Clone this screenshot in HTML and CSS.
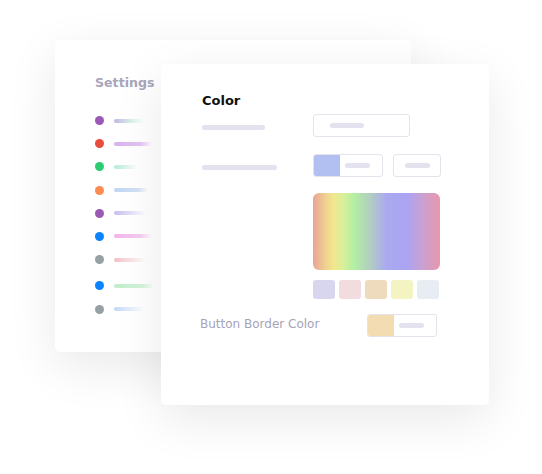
FILE: index.html
```html
<!DOCTYPE html>
<html>
<head>
<meta charset="utf-8">
<link rel="stylesheet" href="styles.css">
</head>
<body>
<div class="desk">
  <div class="card back">
    <div class="title">Settings</div>
    <ul class="menu">
      <li><span class="dot c-purple"></span><span class="bar b1"></span></li>
      <li><span class="dot c-red"></span><span class="bar b2"></span></li>
      <li><span class="dot c-green"></span><span class="bar b3"></span></li>
      <li><span class="dot c-orange"></span><span class="bar b4"></span></li>
      <li><span class="dot c-purple"></span><span class="bar b5"></span></li>
      <li><span class="dot c-blue"></span><span class="bar b6"></span></li>
      <li><span class="dot c-gray"></span><span class="bar b7"></span></li>
      <li class="gap"><span class="dot c-blue"></span><span class="bar b8"></span></li>
      <li><span class="dot c-gray"></span><span class="bar b9"></span></li>
    </ul>
  </div>
  <div class="card front">
    <div class="heading">Color</div>
    <div class="row r1">
      <span class="ph ph-a"></span>
      <div class="box wide"><span class="ph ph-in"></span></div>
    </div>
    <div class="row r2">
      <span class="ph ph-b"></span>
      <div class="controls">
        <div class="box split"><span class="sw sw-blue"></span><span class="ph ph-in2"></span></div>
        <div class="box small"><span class="ph ph-in2"></span></div>
      </div>
    </div>
    <div class="picker">
      <div class="spectrum"></div>
      <div class="swatches">
        <span class="swatch s1"></span>
        <span class="swatch s2"></span>
        <span class="swatch s3"></span>
        <span class="swatch s4"></span>
        <span class="swatch s5"></span>
      </div>
    </div>
    <div class="row r3">
      <span class="label">Button Border Color</span>
      <div class="box split"><span class="sw sw-sand"></span><span class="ph ph-in2"></span></div>
    </div>
  </div>
</div>
</body>
</html>
```
FILE: styles.css
```css
* { box-sizing: border-box; }
html, body { margin: 0; padding: 0; background: #fff; }
body { font-family: "DejaVu Sans", sans-serif; width: 542px; height: 474px; overflow: hidden; }
.desk { position: relative; width: 542px; height: 474px; }
.card {
  position: absolute;
  background: #fff;
  border-radius: 5px;
  box-shadow: 0 14px 50px rgba(0,0,0,0.09);
}
.back { left: 55px; top: 40px; width: 356px; height: 312px; padding: 35px 0 0 40px; }
.front { left: 161px; top: 64px; width: 328px; height: 341px; padding: 29px 0 0 41px; }

.title { font-size: 12.6px; font-weight: bold; color: #a8a6bb; letter-spacing: 0; line-height: 16px; }
.menu { list-style: none; margin: 25px 0 0; padding: 0; display: flex; flex-direction: column; gap: 14.2px; }
.menu li { display: flex; align-items: center; height: 9px; }
.menu li.gap { margin-top: 3px; }
.dot { width: 9px; height: 9px; border-radius: 50%; flex: none; }
.bar { margin-left: 10px; width: 40px; height: 4px; border-radius: 2px; }
.c-purple { background: #9b59b6; }
.c-red { background: #e74c3c; }
.c-green { background: #2ecc71; }
.c-orange { background: #fd8a4f; }
.c-blue { background: #0a84ff; }
.c-gray { background: #95a1a4; }
.b1 { background: linear-gradient(to right, #c1b6e6, #d8f4ea 60%, rgba(255,255,255,0)); width: 30px; }
.b2 { background: linear-gradient(to right, #d8b0ef, #e2c6f3 70%, rgba(255,255,255,0)); width: 38px; }
.b3 { background: linear-gradient(to right, #b6ead8, rgba(214,245,234,0)); width: 24px; }
.b4 { background: linear-gradient(to right, #c1d4f4, #d2e1f6 70%, rgba(255,255,255,0)); width: 34px; }
.b5 { background: linear-gradient(to right, #c5bdef, rgba(214,208,245,0)); width: 32px; }
.b6 { background: linear-gradient(to right, #f0b4ec, #f5cdf2 70%, rgba(255,255,255,0)); width: 38px; }
.b7 { background: linear-gradient(to right, #f1c0c4, rgba(245,210,212,0)); width: 32px; }
.b8 { background: linear-gradient(to right, #bfeec9, #d3f3da 70%, rgba(255,255,255,0)); width: 40px; }
.b9 { background: linear-gradient(to right, #c4d7f6, rgba(214,228,248,0)); width: 30px; }

.heading { font-size: 13px; font-weight: bold; color: #111; line-height: 16px; }
.row { display: grid; grid-template-columns: 111px auto; align-items: center; }
.r1 { margin-top: 5px; }
.r2 { margin-top: 17px; }
.r3 { margin-top: 15px; grid-template-columns: 165px auto; }
.ph { display: block; height: 5px; border-radius: 3px; background: #e3e2ee; }
.ph-a { width: 63px; margin-top: 4px; }
.ph-b { width: 75px; margin-top: 4px; }
.box {
  height: 23px;
  border: 1px solid #e4e3eb;
  border-radius: 3px;
  display: flex;
  align-items: center;
  overflow: hidden;
  background: #fff;
}
.wide { width: 97px; padding-left: 16px; }
.ph-in { width: 34px; }
.controls { display: flex; gap: 10px; }
.split { width: 70px; }
.small { width: 48px; justify-content: center; }
.ph-in2 { width: 25px; margin-left: 5px; }
.small .ph-in2 { margin-left: 0; }
.sw { width: 26px; height: 100%; flex: none; }
.sw-blue { background: #b2c0f1; }
.sw-sand { background: #f3dcb1; }
.picker { margin-left: 111px; margin-top: 16px; width: 127px; }
.spectrum {
  height: 77px;
  border-radius: 6px;
  background: linear-gradient(to right,
    #e9a397 0%, #efd28f 10%, #f2e78e 16%, #d9ef99 24%, #b3f0a2 32%,
    #b2d0be 44%, #aaa9f0 58%, #aba4f3 74%, #c9a0d2 86%, #e898aa 100%);
}
.swatches { display: flex; gap: 4px; margin-top: 10px; }
.swatch { width: 22px; height: 19px; border-radius: 3px; }
.s1 { background: #d8d5ee; }
.s2 { background: #f2dcdd; }
.s3 { background: #eedbbe; }
.s4 { background: #f4f3c2; }
.s5 { background: #e7edf3; }
.label { font-size: 12px; color: #a5a3b7; margin-left: -2px; margin-top: -4px; letter-spacing: 0; }
```
